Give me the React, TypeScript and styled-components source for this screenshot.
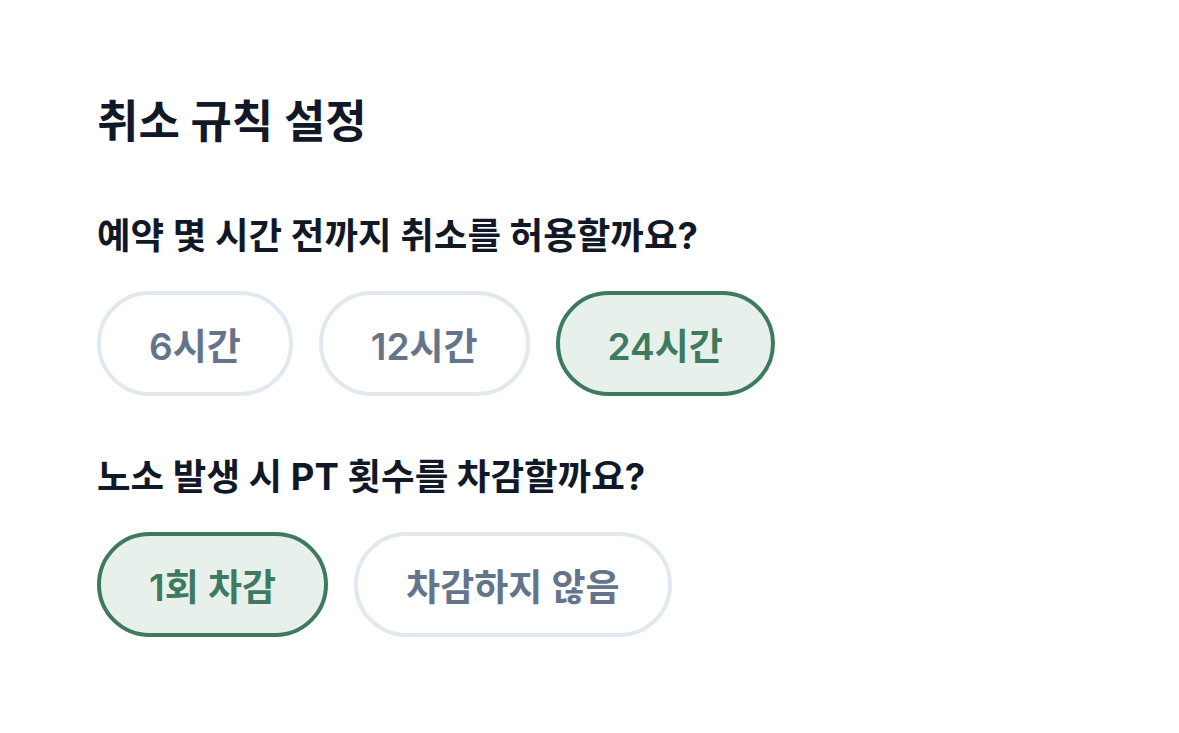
import React, { useState } from "react";
import styled, { createGlobalStyle } from "styled-components";

const Global = createGlobalStyle`
  html, body { margin: 0; padding: 0; background: #ffffff; }
  body { font-family: "Inter", "Noto Sans CJK KR", sans-serif; }
`;

const Page = styled.div`
  box-sizing: border-box;
  padding: 93px 97px 60px;
  display: flex;
  flex-direction: column;
`;

const Title = styled.h1`
  margin: 0 0 61px;
  font-size: 45px;
  line-height: 58px;
  font-weight: 700;
  color: #111827;
`;

const Section = styled.section`
  display: flex;
  flex-direction: column;
  gap: 31px;
  & + & {
    margin-top: 57px;
  }
`;

const Question = styled.h2`
  margin: 0;
  font-size: 36.5px;
  line-height: 48px;
  font-weight: 700;
  color: #111827;
`;

const Options = styled.div`
  display: flex;
  gap: 26px;
`;

const Chip = styled.button<{ $active: boolean }>`
  box-sizing: border-box;
  height: 105px;
  padding: 0 48px;
  border-radius: 53px;
  border: 4px solid ${(p) => (p.$active ? "#3d7a5e" : "#e2e8f0")};
  background: ${(p) => (p.$active ? "#e7f0ea" : "#ffffff")};
  color: ${(p) => (p.$active ? "#3d7a5e" : "#64748b")};
  font-family: "Inter", "Noto Sans CJK KR", sans-serif;
  font-size: 37px;
  font-weight: 600;
  cursor: pointer;
`;

export default function App() {
  const [hours, setHours] = useState("24시간");
  const [deduct, setDeduct] = useState("1회 차감");
  return (
    <>
      <Global />
      <Page>
        <Title>취소 규칙 설정</Title>
        <Section>
          <Question>예약 몇 시간 전까지 취소를 허용할까요?</Question>
          <Options>
            {["6시간", "12시간", "24시간"].map((o) => (
              <Chip key={o} $active={hours === o} onClick={() => setHours(o)}>
                {o}
              </Chip>
            ))}
          </Options>
        </Section>
        <Section>
          <Question>노소 발생 시 PT 횟수를 차감할까요?</Question>
          <Options>
            {["1회 차감", "차감하지 않음"].map((o) => (
              <Chip key={o} $active={deduct === o} onClick={() => setDeduct(o)}>
                {o}
              </Chip>
            ))}
          </Options>
        </Section>
      </Page>
    </>
  );
}
